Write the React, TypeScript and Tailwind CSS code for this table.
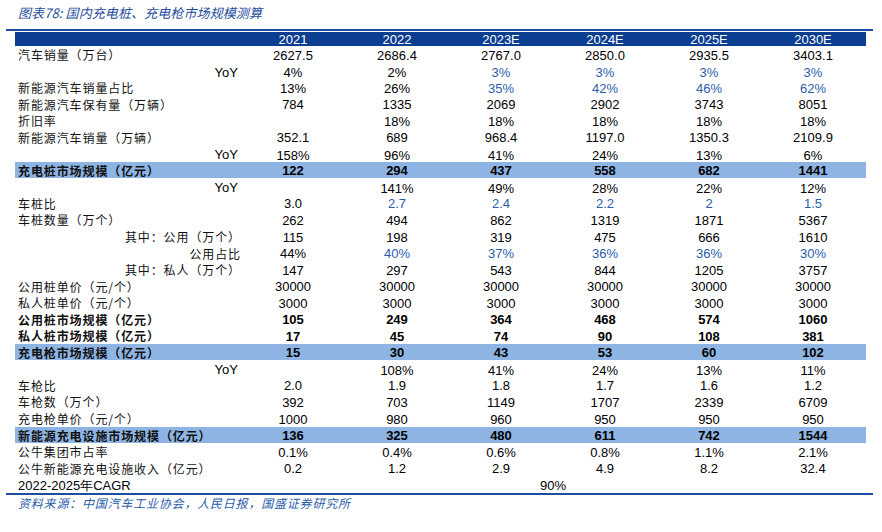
import React from "react";

type Cell = string | { v: string; b: true };
type Row = {
  label: string;
  align?: "left" | "right";
  bold?: boolean;
  hl?: boolean;
  cells: Cell[];
};

const B = (v: string): Cell => ({ v, b: true });

const rows: Row[] = [
  { label: "汽车销量（万台）", cells: ["2627.5", "2686.4", "2767.0", "2850.0", "2935.5", "3403.1"] },
  { label: "YoY", align: "right", cells: ["4%", "2%", B("3%"), B("3%"), B("3%"), B("3%")] },
  { label: "新能源汽车销量占比", cells: ["13%", "26%", B("35%"), B("42%"), B("46%"), B("62%")] },
  { label: "新能源汽车保有量（万辆）", cells: ["784", "1335", "2069", "2902", "3743", "8051"] },
  { label: "折旧率", cells: ["", "18%", "18%", "18%", "18%", "18%"] },
  { label: "新能源汽车销量（万辆）", cells: ["352.1", "689", "968.4", "1197.0", "1350.3", "2109.9"] },
  { label: "YoY", align: "right", cells: ["158%", "96%", "41%", "24%", "13%", "6%"] },
  { label: "充电桩市场规模（亿元）", bold: true, hl: true, cells: ["122", "294", "437", "558", "682", "1441"] },
  { label: "YoY", align: "right", cells: ["", "141%", "49%", "28%", "22%", "12%"] },
  { label: "车桩比", cells: ["3.0", B("2.7"), B("2.4"), B("2.2"), B("2"), B("1.5")] },
  { label: "车桩数量（万个）", cells: ["262", "494", "862", "1319", "1871", "5367"] },
  { label: "其中：公用（万个）", align: "right", cells: ["115", "198", "319", "475", "666", "1610"] },
  { label: "公用占比", align: "right", cells: ["44%", B("40%"), B("37%"), B("36%"), B("36%"), B("30%")] },
  { label: "其中：私人（万个）", align: "right", cells: ["147", "297", "543", "844", "1205", "3757"] },
  { label: "公用桩单价（元/个）", cells: ["30000", "30000", "30000", "30000", "30000", "30000"] },
  { label: "私人桩单价（元/个）", cells: ["3000", "3000", "3000", "3000", "3000", "3000"] },
  { label: "公用桩市场规模（亿元）", bold: true, cells: ["105", "249", "364", "468", "574", "1060"] },
  { label: "私人桩市场规模（亿元）", bold: true, cells: ["17", "45", "74", "90", "108", "381"] },
  { label: "充电枪市场规模（亿元）", bold: true, hl: true, cells: ["15", "30", "43", "53", "60", "102"] },
  { label: "YoY", align: "right", cells: ["", "108%", "41%", "24%", "13%", "11%"] },
  { label: "车枪比", cells: ["2.0", "1.9", "1.8", "1.7", "1.6", "1.2"] },
  { label: "车枪数（万个）", cells: ["392", "703", "1149", "1707", "2339", "6709"] },
  { label: "充电枪单价（元/个）", cells: ["1000", "980", "960", "950", "950", "950"] },
  { label: "新能源充电设施市场规模（亿元）", bold: true, hl: true, cells: ["136", "325", "480", "611", "742", "1544"] },
  { label: "公牛集团市占率", cells: ["0.1%", "0.4%", "0.6%", "0.8%", "1.1%", "2.1%"] },
  { label: "公牛新能源充电设施收入（亿元）", cells: ["0.2", "1.2", "2.9", "4.9", "8.2", "32.4"] },
];

const years = ["2021", "2022", "2023E", "2024E", "2025E", "2030E"];

const cjk = "font-['Noto_Sans_CJK_SC',sans-serif]";
const num = "font-['Liberation_Sans',Arial,sans-serif]";

export default function App() {
  return (
    <div className="w-[882px] h-[532px] bg-white overflow-hidden relative">
      <div className={`h-[29px] flex items-center pl-[18px] pb-[4px] text-[13px] italic text-[#1f4e9c] tracking-[0.1px] ${cjk}`}>
        图表78:&nbsp;国内充电桩、充电枪市场规模测算
      </div>
      <div className="ml-[6px] w-[867px] h-[2px] bg-[#1c4ea0]" />
      <div className="pl-[15px] pt-[1px]">
        <div className={`w-[851px] h-[14px] bg-[#0b3d91] grid grid-cols-[226px_repeat(6,104px)] items-center text-white text-[13px] leading-none ${num}`}>
          <div />
          {years.map((y) => (
            <div key={y} className="text-center">{y}</div>
          ))}
        </div>
        {rows.map((r, i) => (
          <div
            key={i}
            className={`w-[851px] h-[16.55px] grid grid-cols-[226px_repeat(6,104px)] items-center ${r.hl ? "bg-[#8db4e2]" : ""}`}
          >
            {r.label === "YoY" ? (
              <div className={`text-right pr-[3px] text-[13px] text-black ${num}`}>YoY</div>
            ) : (
              <div
                className={`${r.align === "right" ? "text-right pr-0" : "text-left pl-[3px]"} text-[12px] tracking-[0.9px] text-[#111] whitespace-nowrap ${r.bold ? "font-bold" : ""} ${cjk}`}
              >
                {r.label}
              </div>
            )}
            {r.cells.map((c, j) => {
              const isBlue = typeof c !== "string";
              const v = typeof c === "string" ? c : c.v;
              return (
                <div
                  key={j}
                  className={`text-center text-[13px] leading-none ${num} ${r.bold ? "font-bold" : ""} ${isBlue ? "text-[#2a5caa]" : "text-black"}`}
                >
                  {v}
                </div>
              );
            })}
          </div>
        ))}
        <div className={`w-[851px] h-[16.55px] grid grid-cols-[226px_208px_208px_209px] items-center text-[13px] ${num}`}>
          <div className="pl-[3px] text-black">2022-2025年CAGR</div>
          <div />
          <div className="text-center text-black">90%</div>
          <div />
        </div>
      </div>
      <div className="ml-[6px] w-[867px] h-[2px] bg-[#1c4ea0]" />
      <div className={`pl-[18px] pt-[1px] text-[12px] italic text-[#2a5caa] tracking-[0.8px] leading-[14px] ${cjk}`}>
        资料来源：中国汽车工业协会，人民日报，国盛证券研究所
      </div>
    </div>
  );
}
